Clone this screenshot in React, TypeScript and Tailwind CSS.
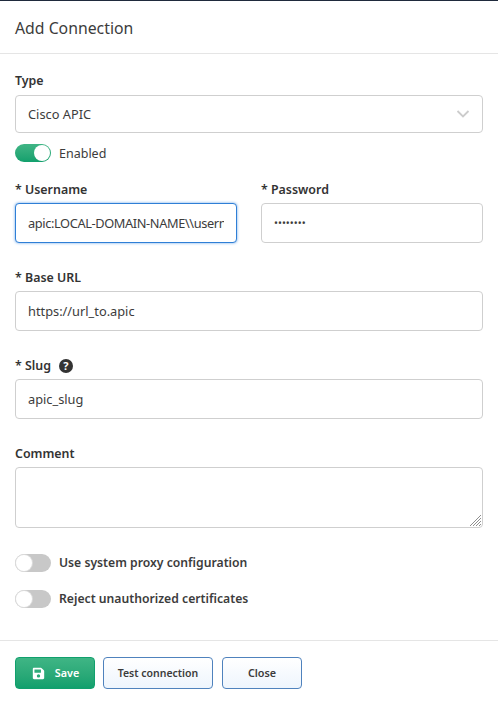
const font = "font-['Noto_Sans',sans-serif]";

function Toggle({ on, label }: { on?: boolean; label: string }) {
  return (
    <div className="flex items-center h-[18px]">
      <div
        className={`w-9 h-[18px] rounded-full flex items-center p-px ${
          on ? 'justify-end bg-gradient-to-b from-[#3fb585] to-[#11a06d]' : 'justify-start bg-[#c8c8c8]'
        }`}
      >
        <div className={`w-4 h-4 rounded-full bg-white ${on ? '' : 'shadow-[0_0_0_1px_#dcdcdc]'}`} />
      </div>
      <span className={`ml-2 text-[#3c3c3c] ${on ? 'pt-[2px] text-[12.5px]' : 'text-[12.2px] font-semibold'}`}>{label}</span>
    </div>
  );
}

function Label({ children }: { children: React.ReactNode }) {
  return <div className="h-[15px] pt-px leading-[14px] text-[12.4px] font-semibold text-[#333] mb-[6px]">{children}</div>;
}

function TextInput({ value, type = 'text', focused }: { value: string; type?: string; focused?: boolean }) {
  return (
    <input
      readOnly
      type={type}
      value={value}
      className={`w-full h-10 px-3 rounded outline-none border bg-white text-[#3c3c3c] ${
        type === 'password' ? 'text-[10.5px]' : 'text-[12.8px]'
      } ${focused ? 'border-[#2f7fd6] shadow-[0_0_3px_#6aa5e8] tracking-[-0.03em]' : 'border-[#cfcfcf]'}`}
    />
  );
}

export default function App() {
  return (
    <div className={`w-[498px] h-[704px] bg-white flex flex-col border-t border-t-[#1f2a3c] ${font}`}>
      <div className="h-[53px] px-[15px] pt-[3px] flex items-center border-b border-[#e5e5e5]">
        <h2 className="text-[15.8px] text-[#3c3c3c]">Add Connection</h2>
      </div>

      <div className="flex-1 px-[15px] pt-[19px]">
        <div className="pb-px">
          <Label>Type</Label>
        </div>
        <div className="h-[38px] px-3 pt-[2px] rounded border border-[#cfcfcf] flex items-center justify-between">
          <span className="text-[12.8px] text-[#3c3c3c]">Cisco APIC</span>
          <svg width="14" height="8" viewBox="0 0 14 8" fill="none" className="-mt-[2px]">
            <path d="M1.5 1 L7 6.5 L12.5 1" stroke="#cccccc" strokeWidth="1.8" />
          </svg>
        </div>
        <div className="mt-[11px]">
          <Toggle on label="Enabled" />
        </div>

        <div className="mt-[20px] flex gap-6">
          <div className="w-[222px]">
            <Label>* Username</Label>
            <TextInput value="apic:LOCAL-DOMAIN-NAME\\username" focused />
          </div>
          <div className="w-[222px]">
            <Label>* Password</Label>
            <TextInput type="password" value="password" />
          </div>
        </div>

        <div className="mt-[27px]">
          <Label>* Base URL</Label>
          <TextInput value="https://url_to.apic" />
        </div>

        <div className="mt-[27px]">
          <Label>
            <span className="inline-flex items-center gap-2">
              * Slug
              <span className="w-[14px] h-[14px] rounded-full bg-[#333] text-white text-[11px] font-bold flex items-center justify-center">?</span>
            </span>
          </Label>
          <TextInput value="apic_slug" />
        </div>

        <div className="mt-[27px]">
          <Label>Comment</Label>
          <div className="relative">
            <textarea readOnly className="block w-full h-[61px] rounded border border-[#cfcfcf] outline-none resize-none" />
            <svg width="13" height="13" viewBox="0 0 13 13" className="absolute right-[1px] bottom-[1px]" stroke="#8f8f8f" strokeWidth="1">
              <path d="M1 12 L12 1 M4 12 L12 4 M7 12 L12 7 M10 12 L12 10" />
            </svg>
          </div>
        </div>

        <div className="mt-[26px]">
          <Toggle label="Use system proxy configuration" />
        </div>
        <div className="mt-[18px]">
          <Toggle label="Reject unauthorized certificates" />
        </div>
      </div>

      <div className="h-[64px] border-t border-[#e5e5e5] px-[15px] pt-4 flex gap-2">
        <button className="w-20 h-8 pl-px rounded bg-gradient-to-b from-[#3fb585] to-[#11a06d] border border-[#11a06d] text-white text-[10.8px] font-semibold flex items-center justify-center gap-[10px]">
          <svg width="13" height="13" viewBox="0 0 448 512" fill="white">
            <path d="M433.9 129.9l-83.9-83.9A48 48 0 0 0 316.1 32H48C21.5 32 0 53.5 0 80v352c0 26.5 21.5 48 48 48h352c26.5 0 48-21.5 48-48V163.9a48 48 0 0 0-14.1-34zM224 416c-35.3 0-64-28.7-64-64s28.7-64 64-64 64 28.7 64 64-28.7 64-64 64zm96-304.5V212c0 6.6-5.4 12-12 12H76c-6.6 0-12-5.4-12-12V108c0-6.6 5.4-12 12-12h228.5c3.2 0 6.2 1.3 8.5 3.5l3.5 3.5c2.3 2.3 3.5 5.3 3.5 8.5z" />
          </svg>
          Save
        </button>
        <button className="w-[110px] h-8 pt-[2px] rounded bg-gradient-to-b from-white to-[#eef5fd] border border-[#4f82bd] text-[#3c3c3c] text-[10.5px] font-semibold">
          Test connection
        </button>
        <button className="w-20 h-8 ml-px rounded bg-gradient-to-b from-white to-[#eef5fd] border border-[#4f82bd] text-[#3c3c3c] text-[10.8px] font-semibold">
          Close
        </button>
      </div>
    </div>
  );
}
